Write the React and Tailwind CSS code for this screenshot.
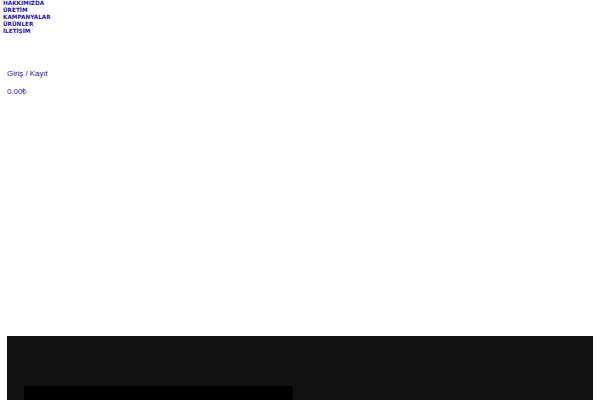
export default function App() {
  const links = ["HAKKIMIZDA", "ÜRETİM", "KAMPANYALAR", "ÜRÜNLER", "İLETİŞİM"];
  return (
    <div className="w-[600px] h-[400px] overflow-hidden bg-white" style={{ fontFamily: '"DejaVu Sans", sans-serif' }}>
      <div className="h-[336px]">
        <nav className="pl-[3px] flex flex-col">
          {links.map((l) => (
            <a key={l} href="#" className="text-[5.7px] leading-[7px] font-bold text-[#1d17b0]">
              {l}
            </a>
          ))}
        </nav>
        <div
          className="pl-[7px] pt-[34px] flex flex-col gap-[9px]"
          style={{ fontFamily: '"Liberation Sans", Arial, sans-serif' }}
        >
          <a href="#" className="text-[7.9px] leading-[9px] text-[#1d17b0]">Giriş / Kayıt</a>
          <span className="text-[7.9px] leading-[9px] text-[#1d17b0]">0.00₺</span>
        </div>
      </div>
      <div className="mx-[7px] h-[64px] bg-[#111111] pt-[50px] pl-[17px]">
        <div className="w-[269px] h-[14px] bg-black"></div>
      </div>
    </div>
  );
}
